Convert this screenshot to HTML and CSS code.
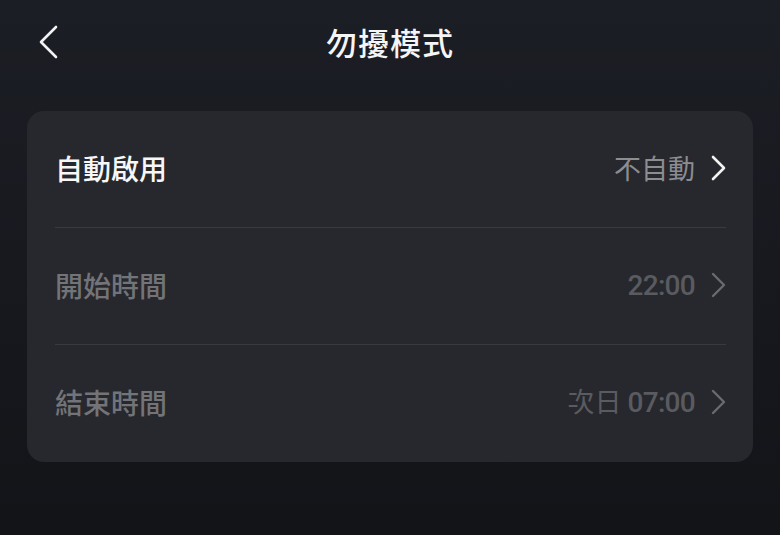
FILE: index.html
```html
<!DOCTYPE html>
<html lang="zh-Hant">
<head>
<meta charset="utf-8">
<link rel="stylesheet" href="styles.css">
</head>
<body>
<div class="page">
  <header class="header">
    <span class="back">
      <svg width="24" height="36" viewBox="0 0 24 36"><polyline points="17,2 2,17 17,32" fill="none" stroke="#f2f2f3" stroke-width="2.6" stroke-linecap="round" stroke-linejoin="round"/></svg>
    </span>
    <h1 class="title">勿擾模式</h1>
  </header>
  <section class="card">
    <div class="row">
      <span class="label label-on">自動啟用</span>
      <span class="value value-on">不自動</span>
      <svg class="chev" width="16" height="26" viewBox="0 0 16 26"><polyline points="3,2 14,13 3,24" fill="none" stroke="#f2f2f3" stroke-width="2.6" stroke-linecap="round" stroke-linejoin="round"/></svg>
    </div>
    <div class="row">
      <span class="label label-off">開始時間</span>
      <span class="value value-off"><span class="num">22:00</span></span>
      <svg class="chev" width="16" height="26" viewBox="0 0 16 26"><polyline points="3,2 14,13 3,24" fill="none" stroke="#6a6b70" stroke-width="2.4" stroke-linecap="round" stroke-linejoin="round"/></svg>
    </div>
    <div class="row">
      <span class="label label-off">結束時間</span>
      <span class="value value-off">次日 <span class="num">07:00</span></span>
      <svg class="chev" width="16" height="26" viewBox="0 0 16 26"><polyline points="3,2 14,13 3,24" fill="none" stroke="#6a6b70" stroke-width="2.4" stroke-linecap="round" stroke-linejoin="round"/></svg>
    </div>
  </section>
</div>
</body>
</html>
```
FILE: styles.css
```css
html, body {
  margin: 0;
  padding: 0;
  height: 100%;
}
body {
  background: linear-gradient(180deg, #1c1e25 0%, #18191f 50%, #131418 100%);
  font-family: "Noto Sans CJK TC", "Noto Sans", Roboto, sans-serif;
  color: #f2f2f3;
}
.page {
  width: 780px;
  height: 535px;
  overflow: hidden;
}
.header {
  position: relative;
  height: 84px;
  display: flex;
  align-items: center;
  justify-content: center;
}
.back {
  position: absolute;
  left: 39px;
  top: 25px;
  width: 24px;
  height: 36px;
}
.back svg { display: block; }
.title {
  margin: 0 0 2px 0;
  font-size: 31px;
  font-weight: 500;
  letter-spacing: 1px;
  color: #f5f5f6;
  line-height: 1;
}
.card {
  margin: 27px 27px 0 27px;
  background: #27282d;
  border-radius: 17px;
  padding: 0 27px 0 28px;
}
.row {
  height: 113px;
  padding-bottom: 3px;
  display: flex;
  align-items: center;
  border-bottom: 1px solid #393a3f;
}
.row:last-child {
  border-bottom: none;
  height: 114px;
}
.label {
  font-size: 28px;
  font-weight: 500;
  flex: 1;
  line-height: 1;
}
.label-on { color: #f7f7f8; }
.label-off { color: #737478; }
.value {
  font-size: 27px;
  font-weight: 400;
  line-height: 1;
}
.value-on { color: #8c8d91; }
.value-off { color: #5a5b60; }
.num {
  font-family: Roboto, "Noto Sans", sans-serif;
  font-weight: 500;
  font-size: 28px;
  letter-spacing: -0.7px;
}
.chev {
  display: block;
  margin-left: 15px;
  margin-right: 0;
}
```
